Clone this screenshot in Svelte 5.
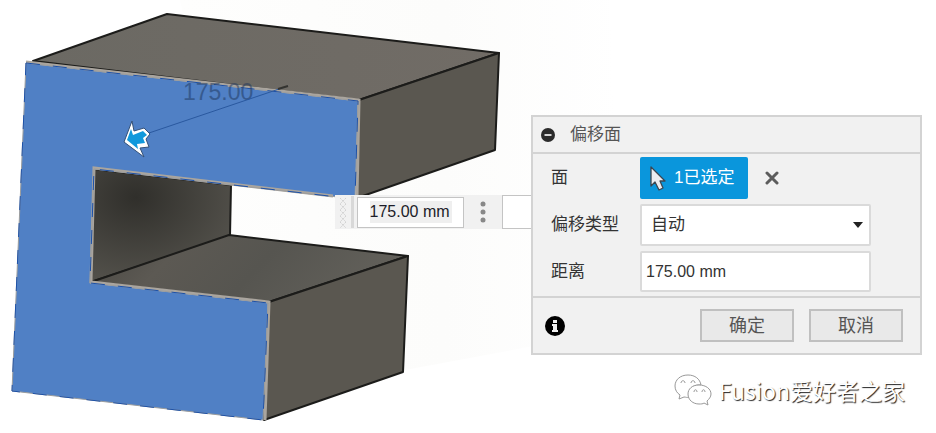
<script lang="ts">
  type Point = [number, number];

  // --- Model corners (canvas space) ---
  const front: Point[] = [
    [26, 63], [358, 101], [355, 199], [94, 169],
    [90, 283], [268, 303], [263, 420], [12, 391]
  ];
  const topFace: Point[] = [[33, 61], [167, 14], [499, 53], [359, 100]];
  const upperSide: Point[] = [[359, 100], [499, 53], [495, 150], [357, 198]];
  const innerWall: Point[] = [[94, 169], [231, 185], [230, 236], [91, 282]];
  const lowerTop: Point[] = [[91, 282], [229, 235], [408, 256], [269, 302]];
  const lowerSide: Point[] = [[269, 302], [408, 256], [403, 372], [264, 420]];

  const pts = (face: Point[]) => face.map((p) => p.join(",")).join(" ");

  const offsetTypes = ["自动", "新建", "移动"];

  let distance = $state("175.00 mm");
  let offsetType = $state("自动");
  let picked = $state(1);
  let expression = $state("");
</script>

<svelte:head>
  <title>偏移面</title>
</svelte:head>

<main class="workspace">
  <svg class="canvas" viewBox="0 0 936 433" preserveAspectRatio="xMinYMin meet" role="img" aria-label="偏移面预览">
    <defs>
      <linearGradient id="topShade" x1="0" y1="0" x2="1" y2="0">
        <stop offset="0" stop-color="#6b6963" />
        <stop offset="1" stop-color="#716c66" />
      </linearGradient>
      <radialGradient id="wallShade" cx="0.32" cy="0.25" r="0.8">
        <stop offset="0" stop-color="#302f2b" />
        <stop offset="1" stop-color="#54524c" />
      </radialGradient>
      <linearGradient id="floorShade" x1="0" y1="0" x2="1" y2="0.2">
        <stop offset="0" stop-color="#484641" />
        <stop offset="0.3" stop-color="#5c5953" />
        <stop offset="0.6" stop-color="#565550" />
        <stop offset="1" stop-color="#62605a" />
      </linearGradient>
      <linearGradient id="ground" x1="0" y1="0" x2="1" y2="0">
        <stop offset="0" stop-color="#fefefd" />
        <stop offset="0.6" stop-color="#fcfcfb" />
        <stop offset="1" stop-color="#ffffff" />
      </linearGradient>
    </defs>

    <polygon class="ground" points="180,0 610,0 620,330 405,370 230,240" />

    <!-- shaded faces -->
    <polygon class="edge" points={pts(innerWall)} fill="url(#wallShade)" />
    <polygon class="edge" points={pts(lowerTop)} fill="url(#floorShade)" />
    <polygon class="edge side" points={pts(lowerSide)} />
    <polygon class="edge" points={pts(topFace)} fill="url(#topShade)" />
    <polygon class="edge side" points={pts(upperSide)} />

    <!-- picked face with its dashed outline -->
    <polygon class="front" points={pts(front)} />
    <path class="rim" d="M26 62L359 100L357 198M333 196L94 168L91 282L269 302L265 420" />
    <polygon class="outline" points={pts(front)} />
    <polygon class="dashes" points={pts(front)} />

    <!-- distance manipulator -->
    <text class="dimension" x="183" y="100">175.00</text>
    <path class="leader" d="M146 134L288 86" />
    <path class="leader dark" d="M278 89L288 86" />
    <path class="arrowShadow" d="M132 121L124 142L144 157L140 148L149 147L146 139L150 134L144 128L134 131Z" />
    <path class="arrow" d="M131 129L127 140L138 149L137 144L145 143L143 138L147 135L143 131L133 135Z" />
  </svg>

  <form class="hud" aria-label="快速输入">
    <span class="grip" aria-hidden="true">
      <svg viewBox="0 0 16 32" width="16" height="32">
        <path d="M5 2L11 8M5 8L11 14M5 14L11 20M5 20L11 26M5 26L11 32M11 2L5 8M11 8L5 14M11 14L5 20M11 20L5 26M11 26L5 32" />
      </svg>
    </span>
    <label class="hudValue"><input aria-label="距离" bind:value={distance} /></label>
    <button type="button" class="more" aria-label="更多">
      <svg viewBox="0 0 6 20" width="6" height="20">
        <circle cx="3" cy="2" r="2.5" /><circle cx="3" cy="10" r="2.5" /><circle cx="3" cy="18" r="2.5" />
      </svg>
    </button>
    <input class="expression" aria-label="表达式" bind:value={expression} />
  </form>

  <section class="dialog" aria-labelledby="dialogTitle">
    <header>
      <button type="button" class="plain" aria-label="折叠">
        <svg viewBox="0 0 16 16" width="14" height="14">
          <circle cx="8" cy="8" r="8" fill="#2b2b2b" />
          <path d="M4 8H12" stroke="#eeeeee" stroke-width="2" />
        </svg>
      </button>
      <h1 id="dialogTitle">偏移面</h1>
    </header>

    <div class="fields">
      <span class="label">面</span>
      <div class="selection">
        <button type="button" class="pick">
          <svg viewBox="0 0 16 25" width="16" height="25">
            <path d="M1 1V20L5 16L9 24L13 22L10 15H15Z" fill="#ececf0" stroke="#3c4650" stroke-width="1.3" stroke-linejoin="round" />
          </svg>
          <span>{picked}已选定</span>
        </button>
        <button type="button" class="plain" aria-label="清除选择" onclick={() => (picked = 0)}>
          <svg viewBox="0 0 14 14" width="14" height="14">
            <path d="M2 2L12 12M12 2L2 12" stroke="#5c5c5c" stroke-width="3" stroke-linecap="round" />
          </svg>
        </button>
      </div>

      <label for="offsetType">偏移类型</label>
      <div class="selectBox">
        <select id="offsetType" bind:value={offsetType}>
          {#each offsetTypes as t}
            <option value={t}>{t}</option>
          {/each}
        </select>
        <svg class="caret" viewBox="0 0 10 6" width="10" height="6"><path d="M0 0H10L5 6Z" /></svg>
      </div>

      <label for="distance">距离</label>
      <input id="distance" bind:value={distance} />
    </div>

    <footer>
      <button type="button" class="plain" aria-label="信息">
        <svg viewBox="0 0 20 20" width="20" height="20">
          <circle cx="10" cy="10" r="10" fill="#000000" />
          <path d="M8 4H12V7H8ZM7 8H12V14H13V16H7V14H8V10H7Z" fill="#f1f1f1" />
        </svg>
      </button>
      <button type="button" class="action">确定</button>
      <button type="button" class="action">取消</button>
    </footer>
  </section>

  <div class="credit">
    <svg viewBox="0 0 38 34" width="38" height="34" aria-hidden="true">
      <path d="M14 2C6 2 1 7 1 13C1 17 3 20 6 22L5 26L10 24C12 24 13 25 15 24C13 17 19 11 27 12C26 6 21 2 14 2Z" />
      <path d="M25 12C18 12 14 16 14 21C14 27 19 31 25 31C27 31 29 31 30 30L34 32L33 28C35 26 37 24 37 21C37 16 32 12 25 12Z" />
      <path d="M7 10C7 7 11 7 11 10M17 10C17 7 21 7 21 10M20 19C20 16 23 16 23 19M28 19C28 16 31 16 31 19" />
    </svg>
    <span>Fusion爱好者之家</span>
  </div>
</main>

<style>
  :global(body) {
    background: #fff;
  }

  .workspace {
    position: relative;
    overflow: hidden;
    font-family: "Liberation Sans", "Noto Sans CJK SC", sans-serif;
    font-size: 17px;
    color: #333;
  }

  svg { display: block; flex: none; }
  .canvas { width: 100%; height: auto; }

  /* model */
  .ground { fill: url(#ground); }
  .edge { stroke: #1c1c1a; stroke-width: 2; stroke-linejoin: round; }
  .side { fill: #5a5750; }
  .front { fill: #5080c5; }
  .rim { fill: none; stroke: #aaa59e; stroke-width: 3; }
  .outline { fill: none; stroke: #9c9d9d; stroke-width: 1; }
  .dashes { fill: none; stroke: #1c51a9; stroke-width: 1; stroke-dasharray: 14 13; }

  .dimension { font-size: 23px; fill: #1d355b; opacity: 0.5; }
  .leader { stroke: #2a589f; stroke-width: 1; }
  .leader.dark { stroke: #34332f; stroke-width: 2; }
  .arrowShadow { fill: #fff; stroke: #345178; stroke-width: 1; stroke-linejoin: round; }
  .arrow { fill: #1199dc; }

  /* floating value box */
  .hud {
    position: absolute;
    top: 195px;
    left: 335px;
    display: flex;
    align-items: center;
    width: 240px;
    height: 34px;
    background: #f1f1f1;
  }
  .grip { border-right: 3px solid #d8d8d8; margin-right: 3px; }
  .grip path { fill: none; stroke: #d2d2d2; stroke-width: 1; stroke-dasharray: 2 1; }
  .hudValue {
    box-sizing: border-box;
    display: flex;
    align-items: center;
    justify-content: center;
    width: 107px;
    height: 31px;
    border: 1px solid #c4c4c4;
    background: #fff;
  }
  .hudValue input {
    width: 82px;
    height: 22px;
    padding: 0;
    border: 0;
    background: #efefef;
    color: #1c1c28;
    font: inherit;
    font-size: 16px;
  }
  .more { border: 0; padding: 0 16px; background: none; }
  .more svg { overflow: visible; }
  .more circle { fill: #888; }
  .expression {
    box-sizing: border-box;
    flex: 1;
    min-width: 0;
    height: 34px;
    border: 1px solid #c4c4c4;
    background: #fff;
  }

  /* dialog */
  .dialog {
    position: absolute;
    top: 115px;
    right: 14px;
    box-sizing: border-box;
    width: 391px;
    border: 2px solid #d3d3d3;
    background: #f1f1f1;
  }
  header {
    display: flex;
    align-items: center;
    gap: 15px;
    height: 35px;
    padding: 0 8px;
    border-bottom: 2px solid #d3d3d3;
  }
  h1 { margin: 0; font-size: 17px; font-weight: 400; line-height: 20px; color: #555; }
  .plain { border: 0; padding: 0; background: none; }

  .fields {
    display: grid;
    grid-template-columns: 89px 231px;
    row-gap: 5px;
    align-items: center;
    padding: 3px 0 4px 18px;
    line-height: 20px;
  }
  .selection { display: flex; align-items: center; gap: 17px; }
  .pick {
    display: flex;
    align-items: center;
    gap: 8px;
    width: 108px;
    height: 42px;
    padding: 0 10px;
    border: 0;
    border-radius: 2px;
    background: #0a96dc;
    color: #fff;
    font: inherit;
    white-space: nowrap;
  }
  .selectBox { position: relative; }
  select,
  #distance {
    box-sizing: border-box;
    width: 100%;
    height: 42px;
    padding: 0 9px;
    border: 2px solid #dadada;
    border-radius: 2px;
    background: #fff;
    color: #333;
    font: inherit;
    appearance: none;
  }
  #distance { height: 41px; padding: 0 4px; font-size: 16px; }
  .caret { position: absolute; right: 8px; top: 18px; fill: #222; pointer-events: none; }

  footer {
    display: flex;
    align-items: center;
    gap: 15px;
    height: 55px;
    padding: 0 17px 0 12px;
    border-top: 2px solid #d3d3d3;
  }
  footer .plain { margin-right: auto; }
  .action {
    box-sizing: border-box;
    width: 94px;
    height: 33px;
    padding: 0;
    border: 2px solid #c0c0c0;
    background: #e9e9e9;
    color: #555;
    font: inherit;
    font-size: 18px;
    line-height: 20px;
  }

  /* watermark */
  .credit {
    position: absolute;
    right: 31px;
    bottom: 26px;
    display: flex;
    align-items: center;
    gap: 7px;
    color: #fff;
    font-family: "Noto Sans CJK SC", sans-serif;
    font-size: 23px;
    line-height: 34px;
    white-space: nowrap;
    text-shadow: 1px 1px 1px #222;
  }
  .credit path { fill: #fff; stroke: #999; stroke-width: 1; stroke-linejoin: round; }
</style>
